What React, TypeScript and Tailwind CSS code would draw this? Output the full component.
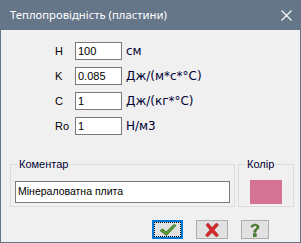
import React from 'react';

const rows = [
  { label: 'H', value: '100', unit: 'см' },
  { label: 'K', value: '0.085', unit: 'Дж/(м*с*°С)' },
  { label: 'C', value: '1', unit: 'Дж/(кг*°С)' },
  { label: 'Ro', value: '1', unit: 'Н/м3' },
];

function CheckIcon() {
  return (
    <svg width="18" height="14" viewBox="0 0 18 14">
      <path d="M1 7.5 L4 6 L7 9 L15 1.5 L17 2.5 L7.5 12.5 Z" fill="#5a9a34" stroke="#3d6e22" strokeWidth="0.8" />
    </svg>
  );
}

function CrossIcon() {
  return (
    <svg width="16" height="16" viewBox="0 0 16 16">
      <path d="M2 3 L4 1 L8 5.5 L12.5 1 L14.5 3 L10 8 L14.5 13 L12.5 15 L8 10.5 L3.5 15 L1.5 13 L6 8 Z" fill="#d62a2a" stroke="#9c1b1b" strokeWidth="0.6" />
    </svg>
  );
}

function HelpIcon() {
  return (
    <svg width="12" height="16" viewBox="0 0 12 16">
      <path d="M2 5 C2 1.5 10 1 10 5 C10 7.5 6.8 7.8 6.8 10.2 L4.8 10.2 C4.8 7 8 6.8 8 5 C8 3 4 3 4 5 Z" fill="#4f8a2a" stroke="#2f5a18" strokeWidth="0.7" />
      <rect x="4.6" y="11.8" width="2.6" height="2.6" fill="#4f8a2a" stroke="#2f5a18" strokeWidth="0.7" />
    </svg>
  );
}

function GroupBox({ title, className, children }: { title: string; className: string; children: React.ReactNode }) {
  return (
    <div className={`relative border border-[#dcdcdc] ${className}`}>
      <span className="absolute -top-[8px] left-[6px] px-[2px] bg-[#f0f0f0] text-[11px] leading-[14px] text-[#000033]">
        {title}
      </span>
      {children}
    </div>
  );
}

export default function App() {
  return (
    <div
      className="w-[301px] h-[243px] bg-[#f0f0f0] border-x border-b border-[#657689] flex flex-col text-[11px] text-black"
      style={{ fontFamily: '"Liberation Sans", Arial, sans-serif' }}
    >
      {/* title bar */}
      <div className="h-[30px] -mx-px bg-[#657689] flex items-center justify-between pl-[10px] pr-[8px] shrink-0">
        <span className="text-white text-[11.3px]" style={{ fontFamily: '"Noto Sans", sans-serif' }}>
          Теплопровідність (пластини)
        </span>
        <svg width="11" height="11" viewBox="0 0 11 11" className="mr-[1px]">
          <path d="M0.5 0.5 L10.5 10.5 M10.5 0.5 L0.5 10.5" stroke="#ffffff" strokeWidth="1.1" />
        </svg>
      </div>

      {/* fields */}
      <div className="pt-[12px] pl-[54px] flex flex-col gap-[7px]">
        {rows.map((r) => (
          <div key={r.label} className="flex items-center h-[18px]">
            <span className="w-[20px]">{r.label}</span>
            <div className="w-[47px] h-[18px] bg-white border border-[#7a7a7a] flex items-center pl-[2px]">
              {r.value}
            </div>
            <span className="ml-[4px] text-[12px] text-[#000033]" style={{ fontFamily: '"DejaVu Sans", sans-serif' }}>
              {r.unit}
            </span>
          </div>
        ))}
      </div>

      {/* comment + colour */}
      <div className="flex gap-[3px] pl-[9px] mt-[29px]">
        <GroupBox title="Коментар" className="w-[225px] h-[43px] px-[4px] pt-[16px]">
          <div className="h-[22px] bg-white border border-[#7a7a7a] flex items-center pl-[2px] text-[10.5px]">
            Мінераловатна плита
          </div>
        </GroupBox>
        <GroupBox title="Колір" className="w-[56px] h-[43px] pl-[11px] pt-[15px]">
          <div className="w-[32px] h-[24px] bg-[#d47394]" />
        </GroupBox>
      </div>

      {/* buttons */}
      <div className="flex gap-[13px] pl-[151px] mt-[13px]">
        <button className="w-[31px] h-[19px] bg-[#e1e1e1] border-2 border-[#0078d7] flex items-center justify-center">
          <div className="w-full h-full border border-dotted border-black flex items-center justify-center">
            <CheckIcon />
          </div>
        </button>
        <button className="w-[32px] h-[19px] bg-[#e1e1e1] border border-[#adadad] flex items-center justify-center">
          <CrossIcon />
        </button>
        <button className="w-[28px] h-[19px] bg-[#e1e1e1] border border-[#adadad] flex items-center justify-center">
          <HelpIcon />
        </button>
      </div>
    </div>
  );
}
